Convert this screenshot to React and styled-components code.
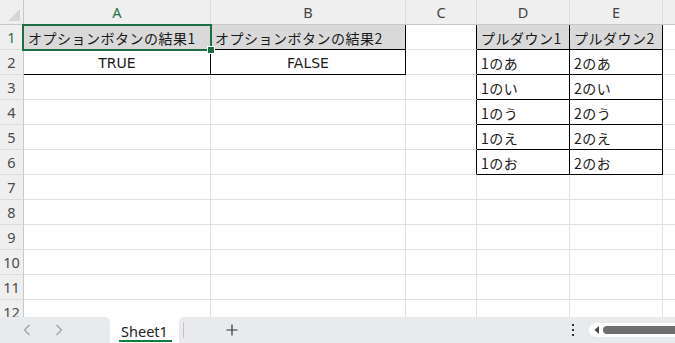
import styled, { createGlobalStyle } from "styled-components";

const GlobalStyle = createGlobalStyle`
  html, body {
    margin: 0;
    padding: 0;
    background: #ffffff;
  }
  body {
    font-family: "Noto Sans CJK JP", "Noto Sans", sans-serif;
  }
`;

const COLS = [
  { key: "A", width: 187 },
  { key: "B", width: 195 },
  { key: "C", width: 71 },
  { key: "D", width: 93 },
  { key: "E", width: 93 },
  { key: "F", width: 70 },
];

const ROW_COUNT = 12;

const DATA = {
  A1: { text: "オプションボタンの結果1", fill: true },
  B1: { text: "オプションボタンの結果2", fill: true },
  A2: { text: "TRUE", align: "center", latin: true },
  B2: { text: "FALSE", align: "center", latin: true },
  D1: { text: "プルダウン1", fill: true },
  E1: { text: "プルダウン2", fill: true },
  D2: { text: "1のあ" },
  E2: { text: "2のあ" },
  D3: { text: "1のい" },
  E3: { text: "2のい" },
  D4: { text: "1のう" },
  E4: { text: "2のう" },
  D5: { text: "1のえ" },
  E5: { text: "2のえ" },
  D6: { text: "1のお" },
  E6: { text: "2のお" },
};

// ranges with thin black borders
const BORDERED = [
  { c1: 0, r1: 1, c2: 1, r2: 2 },
  { c1: 3, r1: 1, c2: 4, r2: 6 },
];

const inRange = (c, r) =>
  BORDERED.some((b) => c >= b.c1 && c <= b.c2 && r >= b.r1 && r <= b.r2);

const Page = styled.div`
  width: 675px;
  height: 343px;
  display: flex;
  flex-direction: column;
  overflow: hidden;
`;

const Sheet = styled.div`
  flex: 1;
  overflow: hidden;
  display: grid;
  grid-template-columns: 24px ${COLS.map((c) => `${c.width}px`).join(" ")};
  grid-auto-rows: 25px;
`;

const Corner = styled.div`
  background: #efefef;
  border-right: 1px solid #c8c8c8;
  border-bottom: 1px solid #c8c8c8;
  position: relative;
  &::after {
    content: "";
    position: absolute;
    right: 3px;
    bottom: 3px;
    width: 12px;
    height: 12px;
    background: #d6d6d6;
    clip-path: polygon(100% 0, 100% 100%, 0 100%);
  }
`;

const ColHead = styled.div`
  background: #efefef;
  border-right: 1px solid #dcdcdc;
  border-bottom: 1px solid #c8c8c8;
  display: flex;
  align-items: center;
  justify-content: center;
  font-family: "Noto Sans", "Liberation Sans", sans-serif;
  font-size: 14.5px;
  color: ${(p) => (p.$active ? "#1e7145" : "#444")};
`;

const RowHead = styled.div`
  background: #efefef;
  border-right: 1px solid #c8c8c8;
  border-bottom: 1px solid #dcdcdc;
  display: flex;
  align-items: center;
  justify-content: center;
  font-family: "Noto Sans", "Liberation Sans", sans-serif;
  font-size: 14.5px;
  color: ${(p) => (p.$active ? "#1e7145" : "#4a4a4a")};
`;

const Cell = styled.div`
  position: relative;
  box-sizing: border-box;
  background: ${(p) => (p.$fill ? "#d9d9d9" : "#ffffff")};
  border-right: 1px solid ${(p) => (p.$blackRight ? "#000" : "#e1e1e1")};
  border-bottom: 1px solid ${(p) => (p.$blackBottom ? "#000" : "#e1e1e1")};
  display: flex;
  align-items: center;
  justify-content: ${(p) => (p.$align === "center" ? "center" : "flex-start")};
  padding: 1px 0 0 ${(p) => (p.$align === "center" ? "0" : "4px")};
  font-family: ${(p) =>
    p.$latin
      ? `"DejaVu Sans", "Noto Sans", sans-serif`
      : `"Noto Sans CJK JP", sans-serif`};
  font-size: 14px;
  letter-spacing: ${(p) => (p.$latin ? "0" : "0.5px")};
  color: #1a1a1a;
  white-space: nowrap;
  overflow: visible;
`;

const Selection = styled.div`
  position: absolute;
  left: -2px;
  top: -1px;
  right: -2px;
  bottom: -2px;
  border: 2px solid #1f6e43;
  pointer-events: none;
  z-index: 2;
  &::after {
    content: "";
    position: absolute;
    right: -5px;
    bottom: -5px;
    width: 6px;
    height: 6px;
    background: #1f6e43;
    border: 1px solid #ffffff;
  }
`;

const TabBar = styled.div`
  height: 26px;
  display: flex;
  align-items: stretch;
  background: #ffffff;
`;

const NavPanel = styled.div`
  width: 110px;
  background: #e9eaed;
  border-top-right-radius: 5px;
  display: flex;
  align-items: center;
  gap: 18px;
  padding-left: 20px;
  box-sizing: border-box;
`;

const NavArrow = styled.span`
  display: inline-flex;
  width: 14px;
  justify-content: center;
`;

const SheetTab = styled.div`
  width: 69px;
  display: flex;
  align-items: center;
  justify-content: center;
  position: relative;
  font-family: "Noto Sans", "Liberation Sans", sans-serif;
  font-size: 14.5px;
  color: #222;
  padding-top: 2px;
  box-sizing: border-box;
`;

const TabUnderline = styled.div`
  position: absolute;
  left: 9px;
  right: 7px;
  bottom: 1px;
  height: 2px;
  background: #107c41;
`;

const RightPanel = styled.div`
  flex: 1;
  background: #e9eaed;
  border-top-left-radius: 5px;
  display: flex;
  align-items: center;
  padding-left: 4px;
`;

const Divider = styled.div`
  width: 1px;
  height: 16px;
  background: #c4c4c4;
`;

const AddButton = styled.div`
  width: 96px;
  display: flex;
  align-items: center;
  justify-content: center;
  color: #333;
  padding-right: 2px;
`;

const Spacer = styled.div`
  flex: 1;
`;

const Dots = styled.div`
  width: 6px;
  display: flex;
  justify-content: center;
  margin-right: 13px;
`;

const ScrollTrack = styled.div`
  width: 81px;
  height: 14px;
  background: #ffffff;
  border-radius: 7px 0 0 7px;
  display: flex;
  align-items: center;
  padding-left: 5px;
  gap: 3px;
`;

const ScrollThumb = styled.div`
  flex: 1;
  height: 8px;
  background: #6e6e6e;
  border-radius: 4px 0 0 4px;
`;

export default function App() {
  const rows = [];
  for (let r = 1; r <= ROW_COUNT; r++) {
    rows.push(
      <RowHead key={`rh${r}`} $active={r === 1}>
        {r}
      </RowHead>
    );
    COLS.forEach((col, ci) => {
      const id = `${col.key}${r}`;
      const d = DATA[id] || {};
      const blackRight = inRange(ci, r) || inRange(ci + 1, r);
      const blackBottom = inRange(ci, r) || inRange(ci, r + 1);
      rows.push(
        <Cell
          key={id}
          $fill={d.fill}
          $align={d.align}
          $latin={d.latin}
          $blackRight={blackRight}
          $blackBottom={blackBottom}
        >
          {d.text}
          {id === "A1" && <Selection />}
        </Cell>
      );
    });
  }

  return (
    <>
      <GlobalStyle />
      <Page>
        <Sheet>
          <Corner />
          {COLS.map((col, i) => (
            <ColHead key={col.key} $active={i === 0}>
              {col.key}
            </ColHead>
          ))}
          {rows}
        </Sheet>
        <TabBar>
          <NavPanel>
            <NavArrow>
              <svg width="8" height="12" viewBox="0 0 8 12">
                <path d="M6.5 1 L1.5 6 L6.5 11" fill="none" stroke="#a0a0a0" strokeWidth="1.2" />
              </svg>
            </NavArrow>
            <NavArrow>
              <svg width="8" height="12" viewBox="0 0 8 12">
                <path d="M1.5 1 L6.5 6 L1.5 11" fill="none" stroke="#a0a0a0" strokeWidth="1.2" />
              </svg>
            </NavArrow>
          </NavPanel>
          <SheetTab>
            Sheet1
            <TabUnderline />
          </SheetTab>
          <RightPanel>
            <Divider />
            <AddButton>
              <svg width="12" height="12" viewBox="0 0 12 12">
                <path d="M6 0.5 V11.5 M0.5 6 H11.5" stroke="#333" strokeWidth="1.2" />
              </svg>
            </AddButton>
            <Spacer />
            <Dots>
              <svg width="4" height="14" viewBox="0 0 4 14">
                <rect x="1" y="1" width="2" height="2" fill="#333" />
                <rect x="1" y="6" width="2" height="2" fill="#333" />
                <rect x="1" y="11" width="2" height="2" fill="#333" />
              </svg>
            </Dots>
            <ScrollTrack>
              <svg width="6" height="8" viewBox="0 0 6 8">
                <path d="M5 0 L0.5 4 L5 8 Z" fill="#444" />
              </svg>
              <ScrollThumb />
            </ScrollTrack>
          </RightPanel>
        </TabBar>
      </Page>
    </>
  );
}
